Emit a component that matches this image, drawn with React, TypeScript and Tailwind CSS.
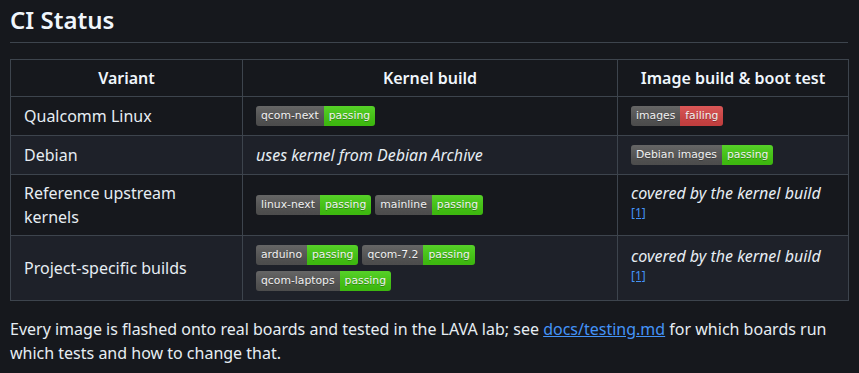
import type { ReactNode } from 'react';

type BadgeProps = { label: string; status: string; ok?: boolean };

function Badge({ label, status, ok = true }: BadgeProps) {
  return (
    <span className="relative inline-flex h-5 overflow-hidden rounded-[3px] font-['DejaVu_Sans',sans-serif] text-[10.8px] leading-5 text-white [text-shadow:0_1px_0_rgba(1,1,1,0.3)]">
      <span className="bg-[#555] px-[5px]">{label}</span>
      <span className={ok ? 'bg-[#44cc11] px-[5px]' : 'bg-[#d64545] px-[5px]'}>{status}</span>
      <span className="pointer-events-none absolute inset-0 bg-gradient-to-b from-white/10 to-black/10" />
    </span>
  );
}

function Badges({ children }: { children: ReactNode }) {
  return <div className="flex flex-wrap gap-x-[4px] gap-y-[6px] py-[3px]">{children}</div>;
}

function Covered() {
  return (
    <>
      <em>covered by the kernel build</em>{' '}
      <sup className="text-[12px]">
        <a href="#" className="text-[#4493f8] underline">
          [1]
        </a>
      </sup>
    </>
  );
}

const cell = 'border border-[#3d444d] px-[13px] py-[6px] align-middle';

export default function App() {
  return (
    <div className="min-h-screen bg-[#16181d] px-[10px] pt-[5px] font-['Noto_Sans',sans-serif] text-[16px] leading-6 text-[#e6edf3]">
      <h2 className="mb-4 w-[838px] border-b border-[#3d444d] pb-[7px] text-[24px] font-semibold leading-[30px] text-[#f0f6fc]">
        CI Status
      </h2>
      <table className="w-[838px] table-fixed border-collapse">
        <colgroup>
          <col className="w-[232px]" />
          <col className="w-[375px]" />
          <col className="w-[231px]" />
        </colgroup>
        <thead>
          <tr>
            <th className={`${cell} font-semibold text-[#f0f6fc]`}>Variant</th>
            <th className={`${cell} font-semibold text-[#f0f6fc]`}>Kernel build</th>
            <th className={`${cell} font-semibold text-[#f0f6fc]`}>Image build &amp; boot test</th>
          </tr>
        </thead>
        <tbody>
          <tr>
            <td className={cell}>Qualcomm Linux</td>
            <td className={cell}>
              <Badges>
                <Badge label="qcom-next" status="passing" />
              </Badges>
            </td>
            <td className={cell}>
              <Badges>
                <Badge label="images" status="failing" ok={false} />
              </Badges>
            </td>
          </tr>
          <tr className="bg-[#1e2129]">
            <td className={cell}>Debian</td>
            <td className={cell}>
              <em>uses kernel from Debian Archive</em>
            </td>
            <td className={cell}>
              <Badges>
                <Badge label="Debian images" status="passing" />
              </Badges>
            </td>
          </tr>
          <tr>
            <td className={cell}>Reference upstream kernels</td>
            <td className={cell}>
              <Badges>
                <Badge label="linux-next" status="passing" />
                <Badge label="mainline" status="passing" />
              </Badges>
            </td>
            <td className={cell}>
              <Covered />
            </td>
          </tr>
          <tr className="bg-[#1e2129]">
            <td className={cell}>Project-specific builds</td>
            <td className={cell}>
              <Badges>
                <Badge label="arduino" status="passing" />
                <Badge label="qcom-7.2" status="passing" />
                <Badge label="qcom-laptops" status="passing" />
              </Badges>
            </td>
            <td className={cell}>
              <Covered />
            </td>
          </tr>
        </tbody>
      </table>
      <p className="mt-4 w-[838px]">
        Every image is flashed onto real boards and tested in the LAVA lab; see{' '}
        <a href="#" className="text-[#4493f8] underline">
          docs/testing.md
        </a>{' '}
        for which boards run which tests and how to change that.
      </p>
    </div>
  );
}
